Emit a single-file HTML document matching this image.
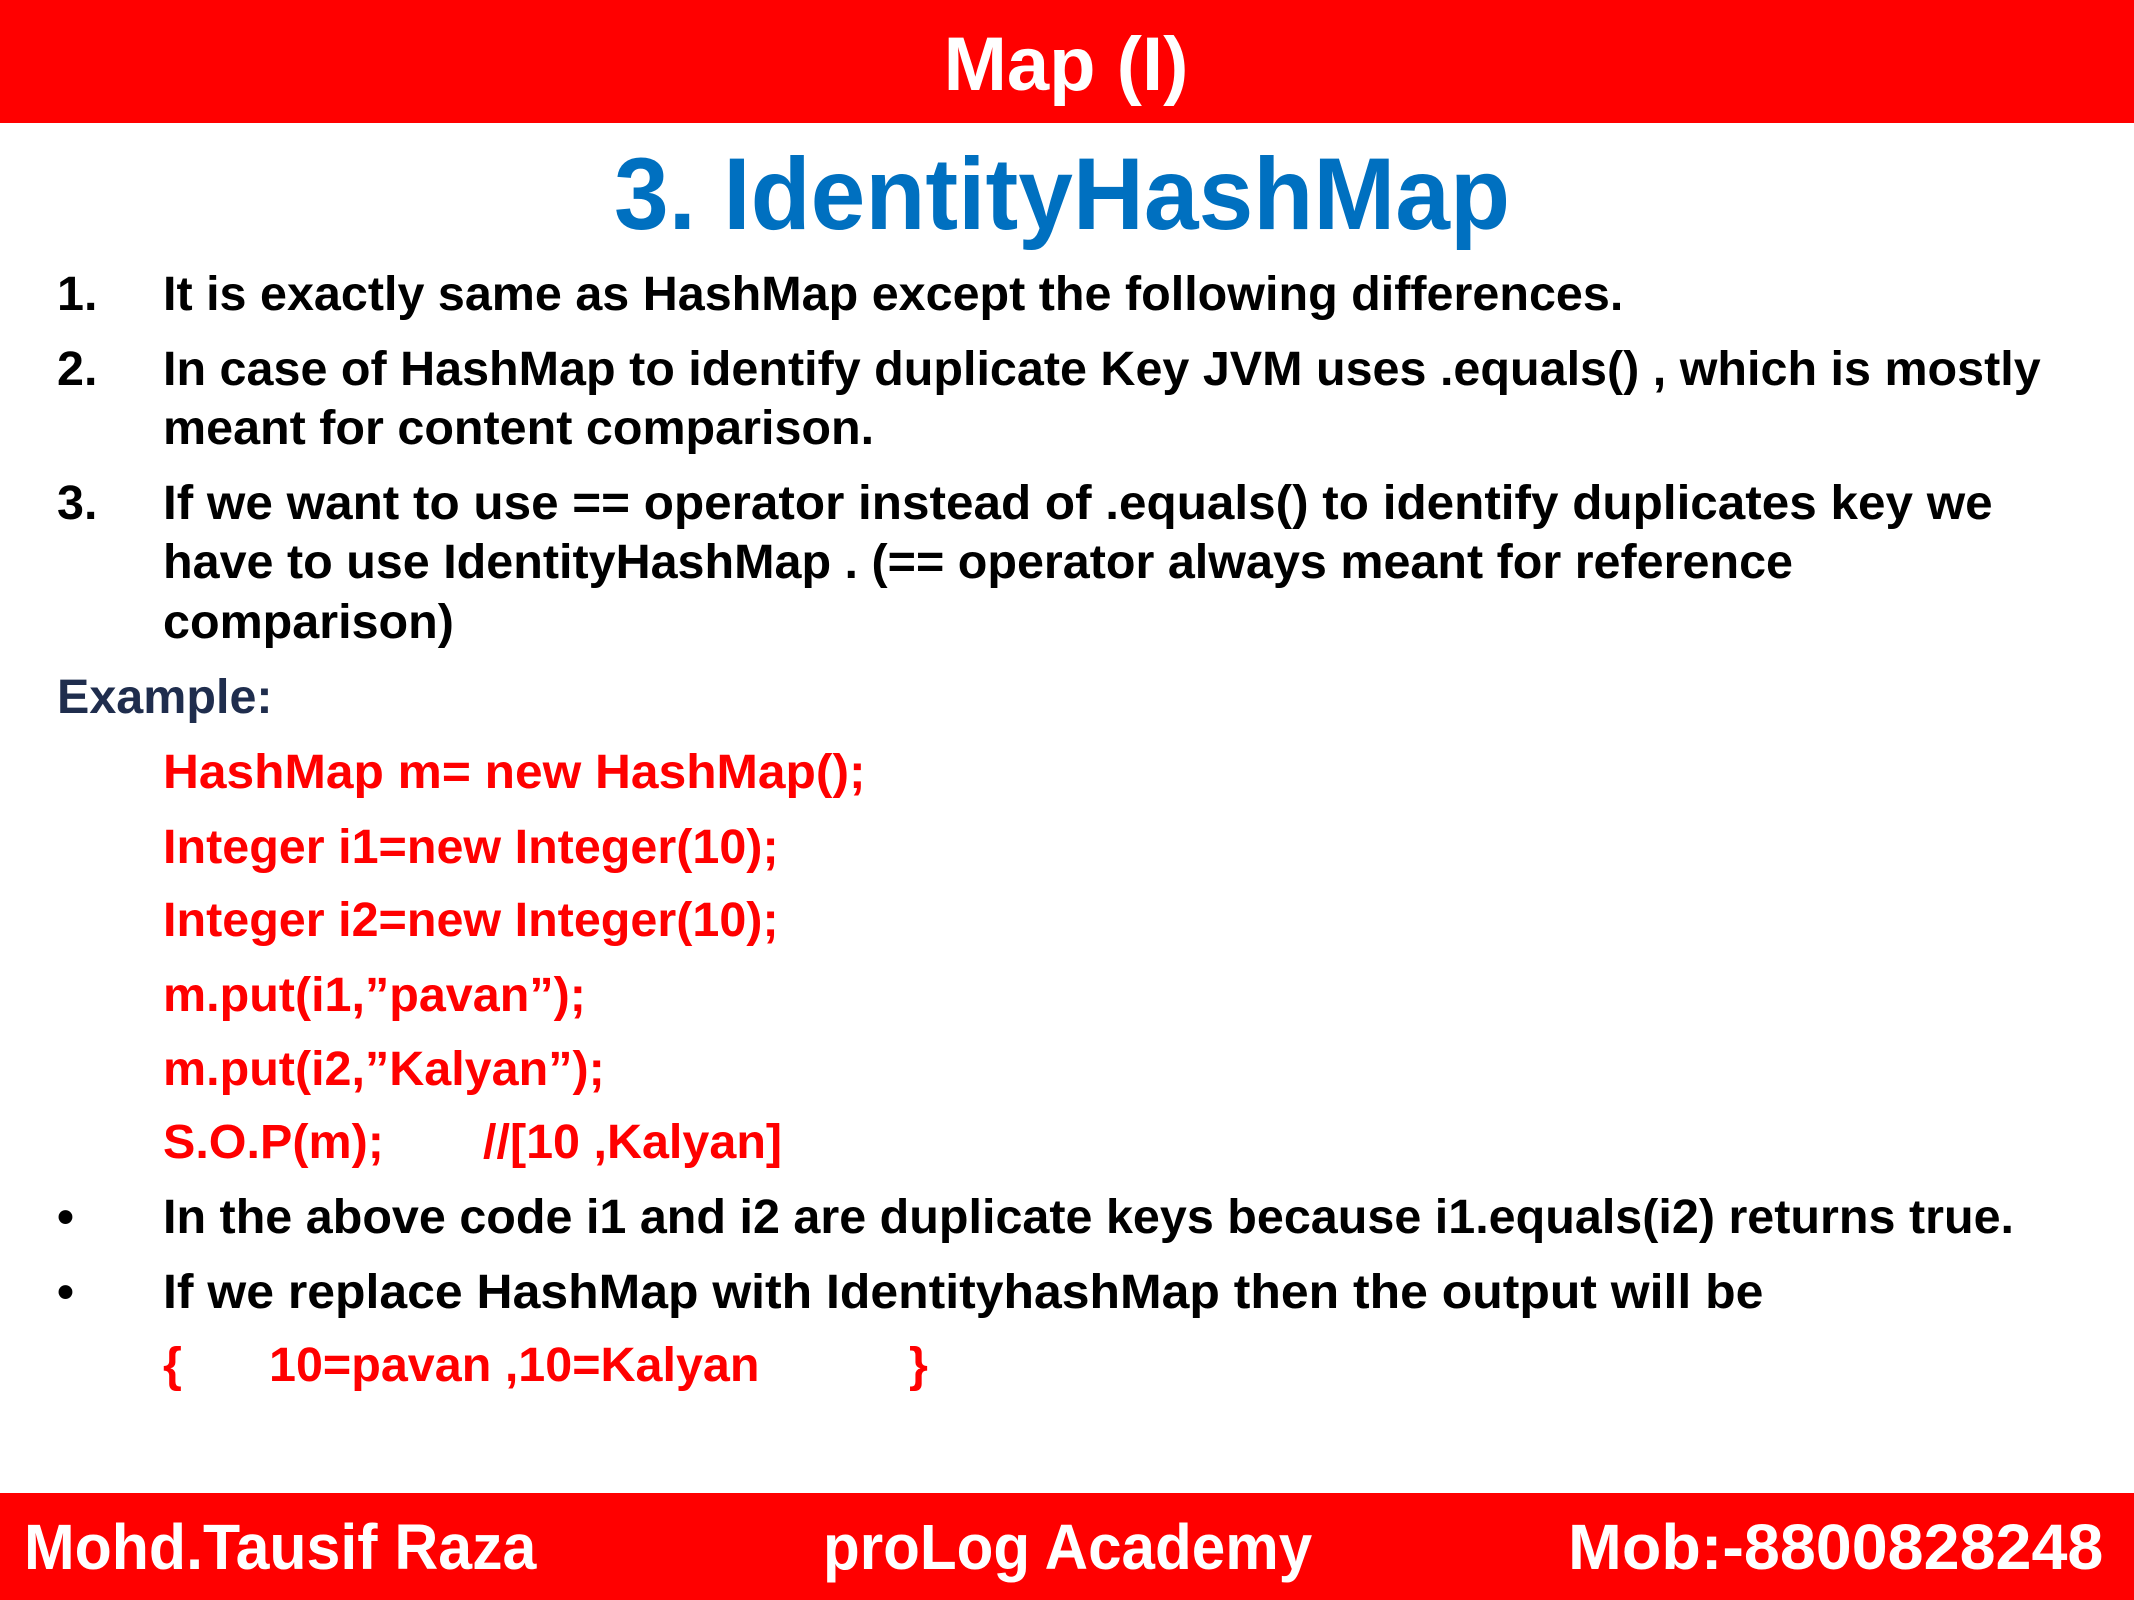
<!DOCTYPE html>
<html><head><meta charset="utf-8"><style>
html,body{margin:0;padding:0}
body{width:2134px;height:1600px;position:relative;background:#fff;overflow:hidden;font-family:"Liberation Sans",Arial,sans-serif;font-weight:bold}
.bar{position:absolute;left:0;width:2134px;background:#ff0000}
.t{position:absolute;white-space:nowrap;line-height:60px;font-size:48px;transform:scaleX(1.01);transform-origin:left center;color:#000}
.r{color:#ff0000}
.c{position:absolute;white-space:nowrap;transform:translateX(-50%)}
</style></head><body>
<div class="bar" style="top:0;height:123px"></div>
<div class="c" style="left:1066px;top:20px;font-size:76px;line-height:90px;color:#fff">Map (I)</div>
<div class="c" style="left:1062px;top:134px;font-size:102px;line-height:120px;color:#0070c0;transform:translateX(-50%) scaleX(0.964)">3. IdentityHashMap</div>

<div class="t" style="left:57px;top:265px">1.</div>
<div class="t" style="left:163px;top:265px">It is exactly same as HashMap except the following differences.</div>
<div class="t" style="left:57px;top:340px">2.</div>
<div class="t" style="left:163px;top:340px">In case of HashMap to identify duplicate Key JVM uses .equals() , which is mostly</div>
<div class="t" style="left:163px;top:399px">meant for content comparison.</div>
<div class="t" style="left:57px;top:474px">3.</div>
<div class="t" style="left:163px;top:474px;transform:scaleX(1.03)">If we want to use == operator instead of .equals() to identify duplicates key we</div>
<div class="t" style="left:163px;top:533px">have to use IdentityHashMap . (== operator always meant for reference</div>
<div class="t" style="left:163px;top:593px">comparison)</div>
<div class="t" style="left:57px;top:668px;color:#1f2d4d">Example:</div>
<div class="t r" style="left:163px;top:743px;transform:scaleX(1.035)">HashMap m= new HashMap();</div>
<div class="t r" style="left:163px;top:818px">Integer i1=new Integer(10);</div>
<div class="t r" style="left:163px;top:891px">Integer i2=new Integer(10);</div>
<div class="t r" style="left:163px;top:966px">m.put(i1,”pavan”);</div>
<div class="t r" style="left:163px;top:1040px">m.put(i2,”Kalyan”);</div>
<div class="t r" style="left:163px;top:1113px">S.O.P(m);</div>
<div class="t r" style="left:483px;top:1113px">//[10 ,Kalyan]</div>
<div class="t" style="left:57px;top:1188px">•</div>
<div class="t" style="left:163px;top:1188px">In the above code i1 and i2 are duplicate keys because i1.equals(i2) returns true.</div>
<div class="t" style="left:57px;top:1263px">•</div>
<div class="t" style="left:163px;top:1263px;transform:scaleX(1.04)">If we replace HashMap with IdentityhashMap then the output will be</div>
<div class="t r" style="left:163px;top:1336px">{</div>
<div class="t r" style="left:269px;top:1336px">10=pavan ,10=Kalyan</div>
<div class="t r" style="left:909px;top:1336px">}</div>

<div class="bar" style="top:1493px;height:107px"></div>
<div class="t" style="left:24px;top:1512px;font-size:64px;line-height:70px;color:#fff;transform:scaleX(0.95)">Mohd.Tausif Raza</div>
<div class="t" style="left:823px;top:1512px;font-size:64px;line-height:70px;color:#fff;transform:scaleX(0.94)">proLog Academy</div>
<div class="t" style="left:1568px;top:1512px;font-size:64px;line-height:70px;color:#fff;transform:scaleX(1.01)">Mob:-8800828248</div>
</body></html>
